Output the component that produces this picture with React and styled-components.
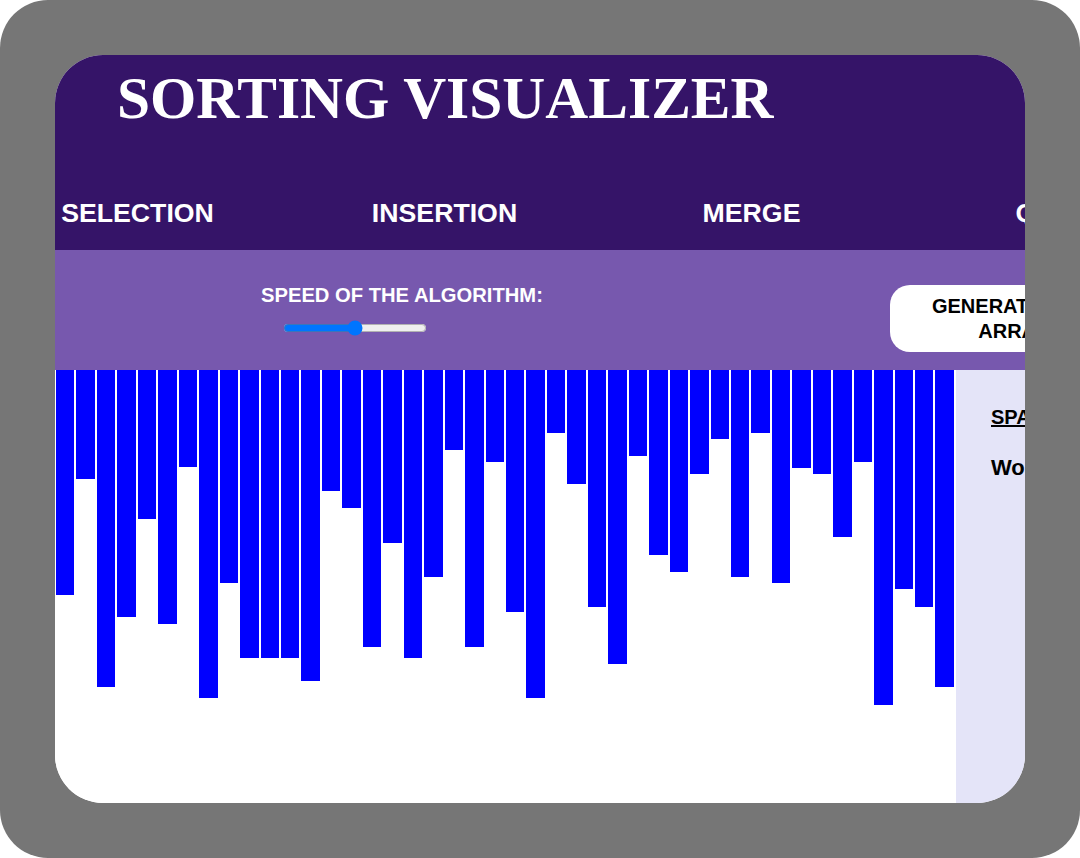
import React, {useState} from 'react';
import styled, {createGlobalStyle} from 'styled-components';

const GlobalStyle = createGlobalStyle`
	body {
		margin: 0;
		background: #ffffff;
		font-family: "Liberation Sans", Arial, sans-serif;
	}
`

const algorithms = ["SELECTION", "INSERTION", "MERGE", "QUICK", "BUBBLE"];

// bar heights in px, read off the current array
const bars = [
	225, 109, 317, 247, 149, 254, 97, 328, 213, 288, 288,
	288, 311, 121, 138, 277, 173, 288, 207, 80, 277, 92,
	242, 328, 63, 114, 237, 294, 86, 185, 202, 104, 69,
	207, 63, 213, 98, 104, 167, 92, 335, 219, 237, 317
];

const App = () => {

	const [speed, setSpeed] = useState(50);

	return (
	<>
		<GlobalStyle />
		<Frame>
			<Page>
				<Header>
					<Title>SORTING VISUALIZER</Title>
					<Nav>
						{algorithms.map((name) => {
							return <NavItem key={name}>{name}</NavItem>
						})}
					</Nav>
				</Header>
				<Controls>
					<SpeedBlock>
						<SpeedLabel>SPEED OF THE ALGORITHM:</SpeedLabel>
						<Slider
							type="range"
							min="0"
							max="100"
							value={speed}
							onChange={(e) => setSpeed(e.target.value)}
						/>
					</SpeedBlock>
					<GenerateButton>GENERATE NEW ARRAY</GenerateButton>
				</Controls>
				<Main>
					<BarsArea>
						{bars.map((h, i) => {
							return <Bar key={i} style={{height: h + "px"}} />
						})}
					</BarsArea>
					<SidePanel>
						<PanelHeading>SPACE COMPLEXITY</PanelHeading>
						<PanelText>Worst Case: O(1)</PanelText>
					</SidePanel>
				</Main>
			</Page>
		</Frame>
	</>
	)
}

const Frame = styled.div`
	width: 1080px;
	height: 858px;
	box-sizing: border-box;
	padding: 55px;
	background: #767676;
	border-radius: 48px;
`

const Page = styled.div`
	width: 970px;
	height: 748px;
	display: flex;
	flex-direction: column;
	background: #ffffff;
	border-radius: 48px;
	overflow: hidden;
`

const Header = styled.div`
	height: 195px;
	flex-shrink: 0;
	display: flex;
	flex-direction: column;
	background: #351468;
	color: #ffffff;
`

const Title = styled.h1`
	margin: 9px 0 0 62px;
	font-family: "Liberation Serif", "Times New Roman", serif;
	font-size: 59.5px;
	font-weight: bold;
	white-space: nowrap;
`

const Nav = styled.div`
	display: flex;
	gap: 142px;
	margin-top: 65px;
`

const NavItem = styled.div`
	flex: 0 0 165px;
	text-align: center;
	font-size: 26.7px;
	font-weight: bold;
	white-space: nowrap;
`

const Controls = styled.div`
	height: 120px;
	flex-shrink: 0;
	display: flex;
	align-items: flex-start;
	background: #7758ae;
`

const SpeedBlock = styled.div`
	display: flex;
	flex-direction: column;
	margin: 34px 0 0 206px;
	flex-shrink: 0;
`

const SpeedLabel = styled.div`
	color: #ffffff;
	font-size: 20.2px;
	font-weight: bold;
	white-space: nowrap;
`

const Slider = styled.input`
	display: block;
	width: 144px;
	height: 16px;
	margin: 13px 0 0 22px;
	accent-color: #0075ff;
`

const GenerateButton = styled.button`
	flex: 0 0 246px;
	height: 67px;
	margin: 35px 0 0 347px;
	padding: 0 8px;
	background: #ffffff;
	color: #000000;
	border: none;
	border-radius: 20px;
	font-family: "Liberation Sans", Arial, sans-serif;
	font-size: 20px;
	font-weight: bold;
	line-height: 25px;
	text-align: center;
`

const Main = styled.div`
	flex: 1;
	display: flex;
	min-height: 0;
`

const BarsArea = styled.div`
	flex: 0 0 900px;
	display: flex;
	align-items: flex-start;
	background: #ffffff;
	padding-right: 1px;
`

const Bar = styled.div`
	flex: 1;
	margin: 0 1px;
	background: #0000ff;
`

const SidePanel = styled.div`
	flex: 0 0 300px;
	box-sizing: border-box;
	padding: 36px 0 0 35px;
	background: #e4e4f8;
	color: #000000;
	white-space: nowrap;
`

const PanelHeading = styled.div`
	font-size: 20px;
	font-weight: bold;
	text-decoration: underline;
`

const PanelText = styled.div`
	margin-top: 26px;
	font-size: 22px;
	font-weight: bold;
`

export default App;
